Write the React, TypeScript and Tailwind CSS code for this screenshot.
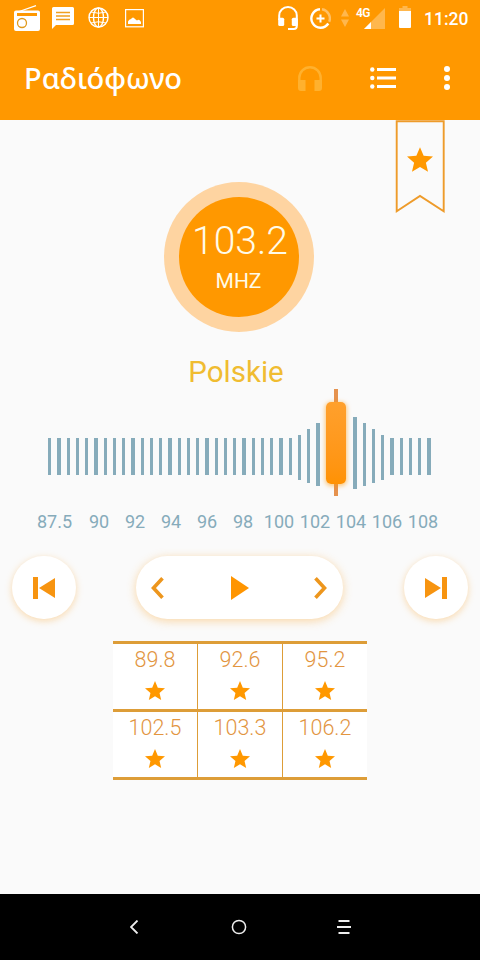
import React from "react";

const labels = [
  { text: "87.5", width: "w-[53px]" },
  { text: "90", width: "w-9" },
  { text: "92", width: "w-9" },
  { text: "94", width: "w-9" },
  { text: "96", width: "w-9" },
  { text: "98", width: "w-9" },
  { text: "100", width: "w-9" },
  { text: "102", width: "w-9" },
  { text: "104", width: "w-9" },
  { text: "106", width: "w-9" },
  { text: "108", width: "w-9" },
];

const presets = ["89.8", "92.6", "95.2", "102.5", "103.3", "106.2"];

// taller lines around the tuned frequency: [top offset, height]
const peaks: Record<number, [number, number]> = {
  27: [18, 45],
  28: [12, 54],
  29: [6, 63],
  33: [0, 72],
  34: [6, 63],
  35: [12, 54],
  36: [18, 45],
};

const bars = Array.from({ length: 42 }, (_, i) => {
  const [top, height] = peaks[i] ?? [21, 37];
  return { top, height, wide: i % 4 === 1, hidden: i > 29 && i < 33 };
});

function Star({ className }: { className: string }) {
  return (
    <svg viewBox="2 2 20 19" className={className} fill="#ff9800">
      <path d="M12 17.27L18.18 21l-1.64-7.03L22 9.24l-7.19-.61L12 2 9.19 8.63 2 9.24l5.46 4.73L5.82 21z" />
    </svg>
  );
}

function StatusBar() {
  return (
    <div className="flex h-9 items-start pl-[14px] pr-3 text-white">
      <svg width="26" height="26" viewBox="0 0 26 26" className="mt-[5px]">
        <path d="M3 7.2L22 .6" stroke="white" strokeWidth="1.2" />
        <path
          fillRule="evenodd"
          fill="white"
          d="M2 5.500h22a2 2 0 0 1 2 2v16.500a2 2 0 0 1-2 2H2a2 2 0 0 1-2-2V7.500a2 2 0 0 1 2-2zM3 8v3h20V8z"
        />
        <circle cx="8" cy="18" r="4.500" fill="none" stroke="#e09a1c" strokeWidth="1.300" />
      </svg>
      <svg width="22" height="22" viewBox="0 0 22 22" className="ml-3 mt-[7px]">
        <path d="M1.500 0h19Q22 0 22 1.500v15q0 1.500-1.500 1.500H4l-4 4V1.500Q0 0 1.500 0z" fill="white" />
        <path d="M4 5.500h14M4 9h14M4 12.500h14" stroke="#f0a020" strokeWidth="1.400" />
      </svg>
      <svg
        width="21"
        height="21"
        viewBox="0 0 21 21"
        className="ml-[14px] mt-[7px]"
        fill="none"
        stroke="white"
        strokeWidth="1.4"
      >
        <circle cx="10.500" cy="10.500" r="9.500" />
        <ellipse cx="10.500" cy="10.500" rx="5" ry="9.500" />
        <path d="M3 5q7.500 2.500 15 0M3 16q7.500-2.500 15 0M1 10.500h19M10.500 1v19" strokeWidth="1" />
      </svg>
      <svg width="19" height="19" viewBox="0 0 19 19" className="ml-4 mt-[9px]">
        <rect x=".6" y=".6" width="17.800" height="17.200" fill="none" stroke="white" strokeWidth="1.2" />
        <path d="M3 15v-2.500q1-2.500 3-2.500 2-3 4 0l2 1.500q2-2 4 1.500v2z" fill="white" />
      </svg>
      <svg width="20" height="24" viewBox="0 0 20 24" className="ml-auto mt-[6px]">
        <path
          d="M1.200 14V9.500a8.800 8.400 0 0 1 17.600 0V20q0 3-3 3H10"
          fill="none"
          stroke="white"
          strokeWidth="2"
        />
        <rect x=".2" y="11.800" width="6" height="8.200" rx="1.500" fill="white" />
        <rect x="13.800" y="11.800" width="6" height="8.200" rx="1.500" fill="white" />
      </svg>
      <svg width="21" height="21" viewBox="0 0 21 21" className="ml-3 mt-2" fill="none" strokeWidth="2.400">
        <path d="M12 1.300a9.200 9.200 0 0 1 7.200 12.500" stroke="#ffc166" />
        <path d="M10 1.300a9.200 9.200 0 1 0 8.300 14.200" stroke="white" />
        <path d="M10.500 6.500v8M6.500 10.500h8" stroke="white" strokeWidth="2" />
      </svg>
      <svg width="8" height="18" viewBox="0 0 8 18" className="ml-[10px] mt-[9px]" fill="#ffb74d">
        <path d="M4 0l4 7.500H0zM4 18l4-7.500H0z" />
      </svg>
      <div className="relative ml-[15px] mt-2 h-[21px] w-[21px]">
        <svg width="21" height="21" viewBox="0 0 21 21">
          <path d="M21 0v21H0z" fill="#ffb74d" />
          <path d="M7 14v7H0z" fill="white" />
        </svg>
        <span className="absolute -left-2 -top-[2px] text-[12px] leading-[14px] font-semibold tracking-[-0.6px]">
          4G
        </span>
      </div>
      <svg width="12" height="22" viewBox="0 0 12 22" className="ml-[14px] mt-[6px]">
        <path d="M3.500 0h5v2H12v4H0V2h3.500z" fill="#ffb74d" />
        <path d="M0 5h12v16q0 1-1 1H1q-1 0-1-1z" fill="white" />
      </svg>
      <span className="ml-[13px] mt-[7px] w-[44px] whitespace-nowrap text-[17.500px] leading-6 font-medium">
        11:20
      </span>
    </div>
  );
}

function Header() {
  return (
    <div className="flex h-[84px] items-center pl-6 pr-[30px] text-white">
      <h1 className="whitespace-nowrap font-['Noto_Sans'] text-[29px] leading-9 font-medium">Ραδιόφωνο</h1>
      <svg width="24" height="25" viewBox="0 0 24 25" className="ml-auto">
        <path d="M1.300 16v-4a10.700 10.700 0 0 1 21.400 0v4" fill="none" stroke="#ffb12e" strokeWidth="2.400" />
        <path d="M0 14h7.500v11H3q-3 0-3-3zM24 14h-7.500v11H21q3 0 3-3z" fill="#ffb12e" />
      </svg>
      <svg width="26" height="22" viewBox="0 0 26 22" className="ml-12" fill="white">
        <circle cx="2.300" cy="2.500" r="2.200" />
        <circle cx="2.300" cy="11" r="2.200" />
        <circle cx="2.300" cy="19.500" r="2.200" />
        <path d="M7 1h19v3H7zM7 9.500h19v3H7zM7 18h19v3H7z" />
      </svg>
      <svg width="6" height="24" viewBox="0 0 6 24" className="ml-12" fill="white">
        <circle cx="3" cy="3" r="3" />
        <circle cx="3" cy="12" r="3" />
        <circle cx="3" cy="21" r="3" />
      </svg>
    </div>
  );
}

function Dial() {
  return (
    <div className="relative mt-[17px] flex h-[101px] flex-col pl-12">
      <div className="mt-[11px] flex items-start gap-1.5">
        {bars.map((bar, i) => (
          <div
            key={i}
            className={`${bar.wide ? "w-1" : "w-[3px]"} ${
              bar.hidden ? "invisible" : "bg-[#86abba]"
            }`}
            style={{ height: bar.height, marginTop: bar.top }}
          />
        ))}
      </div>
      {/* tuner knob */}
      <div className="absolute left-[334px] -top-[17px] h-[107px] w-1 bg-[#e5924e]" />
      <div className="absolute left-[326px] -top-[4px] h-[82px] w-5 rounded-[5px] bg-gradient-to-b from-[#ffa02c] to-[#ff9203] shadow-[0_1px_4px_1px_rgba(255,152,0,0.5)]" />
    </div>
  );
}

export default function App() {
  return (
    <div
      className="flex h-[960px] w-[480px] flex-col overflow-hidden bg-[#fafafa]"
      style={{ fontFamily: "Roboto, 'Noto Sans', sans-serif" }}
    >
      <header className="h-[120px] shrink-0 bg-[#ff9800]">
        <StatusBar />
        <Header />
      </header>

      <main className="relative flex h-[774px] flex-col">
        <div className="absolute left-[395px] top-0 h-[94px] w-[50px]">
          <svg width="50" height="94" viewBox="0 0 50 94" className="absolute inset-0">
            <path d="M1.700 1.200h47v90L25 76 1.700 91.200z" fill="none" stroke="#ee9b2a" strokeWidth="1.900" />
          </svg>
          <Star className="absolute left-3 top-[27px] h-[25px] w-[26px]" />
        </div>

        <div className="ml-[164px] mt-[62px] flex h-[150px] w-[150px] shrink-0 items-center justify-center rounded-full bg-[#fed4a1]">
          <div className="flex h-[120px] w-[120px] flex-col items-center rounded-full bg-[#ff9800] text-[#fffbe8]">
            <span className="ml-[2px] mt-[20px] text-[39px] leading-[48px] font-light">103.2</span>
            <span className="-ml-px mt-1 text-[21px] leading-6">MHZ</span>
          </div>
        </div>
        <p className="mt-[22px] w-[472px] text-center text-[29.500px] leading-9 text-[#f0bc31]">Polskie</p>

        <div className="-mt-px">
          <Dial />
        </div>

        <div className="mt-[3px] flex pl-7 text-center text-lg leading-6 text-[#86abba]">
          {labels.map((l) => (
            <span key={l.text} className={`${l.width} shrink-0`}>
              {l.text}
            </span>
          ))}
        </div>

        <div className="mt-[22px] flex h-[63px] shrink-0 items-center justify-between px-3">
          <button className="flex h-[63px] w-16 items-center justify-center rounded-full bg-white shadow-[0_2px_7px_rgba(250,170,60,0.4)]">
            <svg width="22" height="22" viewBox="0 0 22 22" fill="#f79410">
              <path d="M0 0h5v22H0zM22 1v20L6 11z" />
            </svg>
          </button>
          <button className="mr-[1px] flex h-[63px] w-[207px] items-center justify-between rounded-full bg-white pl-[15px] pr-4 shadow-[0_2px_10px_rgba(250,170,60,0.45)]">
            <svg width="13" height="22" viewBox="0 0 13 22" fill="none" stroke="#ed961d" strokeWidth="3.600">
              <path d="M11.500 1.300L2.500 11l9 9.700" />
            </svg>
            <svg width="18" height="24" viewBox="0 0 18 24" fill="#ff9500" className="ml-px">
              <path d="M0 0v24l18-12z" />
            </svg>
            <svg width="13" height="22" viewBox="0 0 13 22" fill="none" stroke="#ed961d" strokeWidth="3.600">
              <path d="M1.500 1.300l9 9.700-9 9.700" />
            </svg>
          </button>
          <button className="flex h-[63px] w-16 items-center justify-center rounded-full bg-white shadow-[0_2px_7px_rgba(250,170,60,0.4)]">
            <svg width="22" height="22" viewBox="0 0 22 22" fill="#f79410">
              <path d="M17 0h5v22h-5zM0 1v20l16-10z" />
            </svg>
          </button>
        </div>

        <div className="ml-[113px] mt-[22px] grid w-[254px] grid-cols-[85px_85px_84px] border-t-[3px] border-[#dd9d38] bg-white">
          {presets.map((p, i) => (
            <div
              key={p}
              className={`flex h-[68px] flex-col items-center border-b-[3px] border-[#dd9d38] ${
                i % 3 < 2 ? "border-r" : ""
              }`}
            >
              <span className="mt-[3px] text-[21.500px] leading-[26px] font-light text-[#e2953f]">{p}</span>
              <Star className="mt-[8px] h-[19px] w-5" />
            </div>
          ))}
        </div>
      </main>

      <nav className="flex h-[66px] shrink-0 items-center bg-black pl-[130px]">
        <svg width="9" height="14" viewBox="0 0 9 14" fill="none" stroke="#eee" strokeWidth="1.800">
          <path d="M7.500 .5L1 7l6.500 6.500" />
        </svg>
        <svg width="16" height="16" viewBox="0 0 16 16" className="ml-[92px]" fill="none" stroke="#eee" strokeWidth="1.500">
          <circle cx="8" cy="8" r="6.600" />
        </svg>
        <svg width="14" height="14" viewBox="0 0 14 14" className="ml-[90px]" stroke="#eee" strokeWidth="1.800">
          <path d="M1.500 1h11M0 7h14M1.500 13h11" />
        </svg>
      </nav>
    </div>
  );
}
